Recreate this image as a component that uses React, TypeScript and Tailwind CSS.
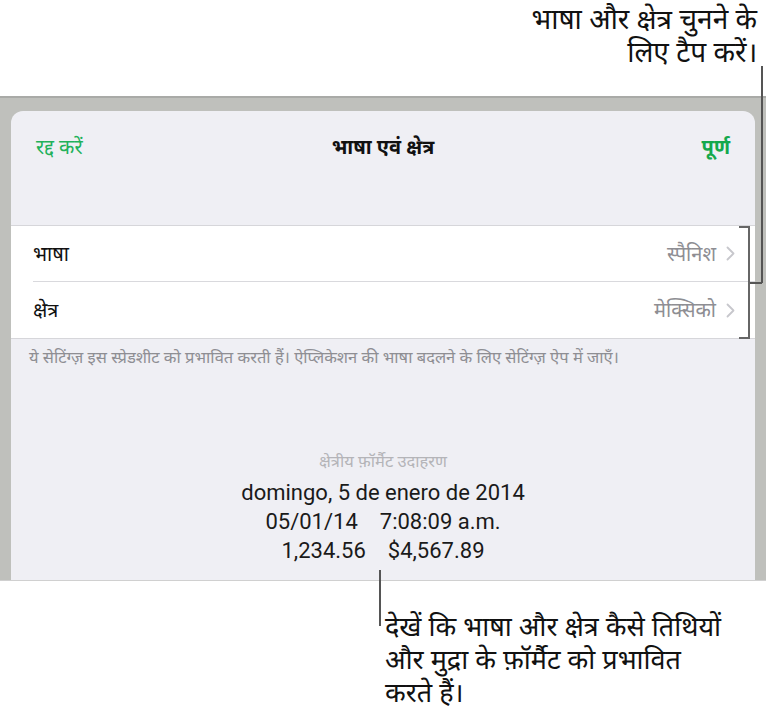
const dev = "font-['Noto_Sans','Noto_Sans_Devanagari','Lohit_Devanagari',sans-serif]";

const Chevron = () => (
  <svg width="9" height="15" viewBox="0 0 9 15" className="ml-[10px]">
    <path d="M1.5 1.5 L7.5 7.5 L1.5 13.5" fill="none" stroke="#c7c7cc" strokeWidth="1.8" strokeLinecap="round" strokeLinejoin="round" />
  </svg>
);

const Row = ({ label, value, last }: { label: string; value: string; last?: boolean }) => (
  <div className="pl-[22px]">
    <div className={`h-[56px] flex items-center justify-between pr-[20px] ${last ? "" : "border-b border-[#d9d9dd]"}`}>
      <span className="text-[20px] leading-[24px] text-[#111]">{label}</span>
      <span className="flex items-center text-[20px] leading-[24px] text-[#8e8e93]">
        {value}
        <Chevron />
      </span>
    </div>
  </div>
);

export default function App() {
  return (
    <div className={`relative w-[766px] h-[716px] bg-white overflow-hidden ${dev}`}>
      {/* top callout */}
      <div className="h-[96px] pt-[2px] pr-[9px] text-right text-[28px] leading-[33px] text-[#111]">
        <p>भाषा और क्षेत्र चुनने के</p>
        <p>लिए टैप करें।</p>
      </div>

      {/* device frame */}
      <div className="h-[484px] bg-[#bfc0bc] border-t-2 border-[#a9aaa7] px-[11px] pt-[13px]">
        <div className="h-full bg-[#efeff4] rounded-t-[12px] flex flex-col">
          <div className="h-[72px] px-[25px] grid grid-cols-[1fr_auto_1fr] items-center text-[20px] leading-[24px]">
            <span className="text-[#21b15a]">रद्द करें</span>
            <span className="font-bold text-[#111]">भाषा एवं क्षेत्र</span>
            <span className="font-bold text-[#14a84c] text-right">पूर्ण</span>
          </div>
          <div className="h-[42px]" />
          <div className="bg-white border-y border-[#d6d6da]">
            <Row label="भाषा" value="स्पैनिश" />
            <Row label="क्षेत्र" value="मेक्सिको" last />
          </div>
          <p className="pl-[18px] pt-[7px] text-[16.5px] leading-[22px] text-[#8e8e93]">
            ये सेटिंग्ज़ इस स्प्रेडशीट को प्रभावित करती हैं। ऐप्लिकेशन की भाषा बदलने के लिए सेटिंग्ज़ ऐप में जाएँ।
          </p>
          <div className="mt-[82px] flex flex-col items-center">
            <p className="text-[16.5px] leading-[22px] text-[#b4b4b8] mb-[6px]">क्षेत्रीय फ़ॉर्मैट उदाहरण</p>
            <div className="font-['Roboto',sans-serif] text-[22px] leading-[29px] text-[#1a1a1a] text-center">
              <p>domingo, 5 de enero de 2014</p>
              <p className="flex gap-[22px] justify-center">
                <span>05/01/14</span>
                <span>7:08:09 a.m.</span>
              </p>
              <p className="flex gap-[22px] justify-center">
                <span>1,234.56</span>
                <span>$4,567.89</span>
              </p>
            </div>
          </div>
        </div>
      </div>
      <div className="h-px bg-[#d0d0d0]" />

      {/* bottom callout */}
      <div className="pl-[385px] pt-[28px] text-[27px] leading-[33px] text-[#111]">
        <p>देखें कि भाषा और क्षेत्र कैसे तिथियों</p>
        <p>और मुद्रा के फ़ॉर्मैट को प्रभावित</p>
        <p>करते हैं।</p>
      </div>

      {/* callout lines */}
      <div className="absolute left-[761px] top-[66px] w-[2px] h-[217px] bg-[#555]" />
      <div className="absolute left-[748px] top-[282px] w-[14px] h-[2px] bg-[#555]" />
      <div className="absolute left-[739px] top-[226px] w-[11px] h-[113px] border-2 border-l-0 border-[#666]" />
      <div className="absolute left-[379px] top-[570px] w-[2px] h-[56px] bg-[#555]" />
    </div>
  );
}
